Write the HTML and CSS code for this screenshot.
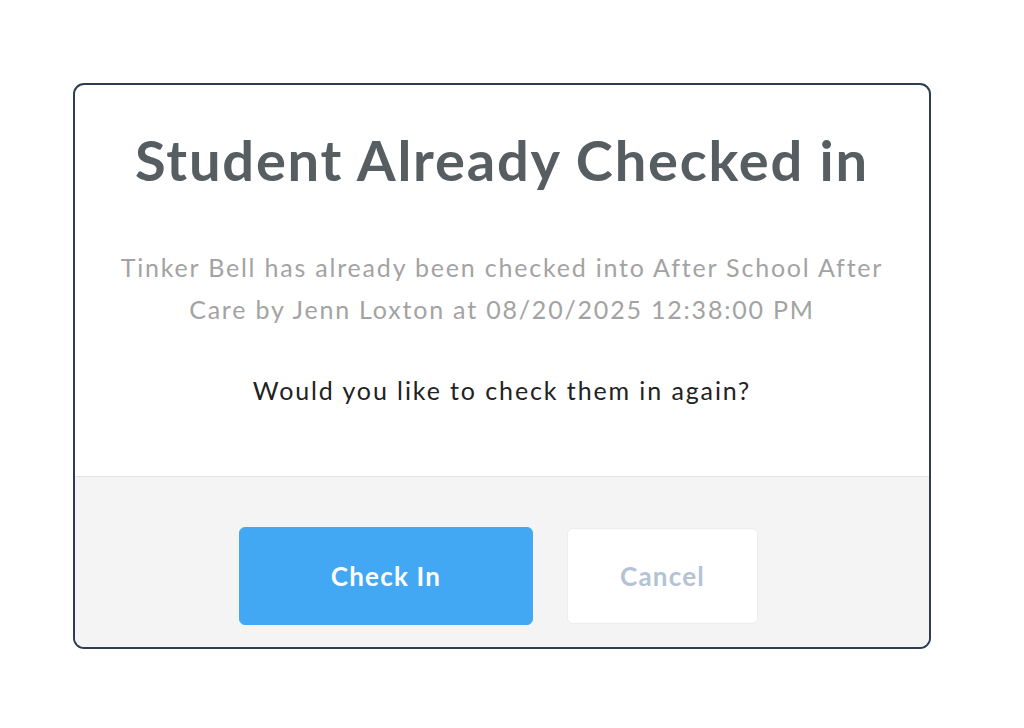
FILE: index.html
```html
<!DOCTYPE html>
<html>
<head>
<meta charset="utf-8">
<link rel="stylesheet" href="styles.css">
</head>
<body>
<div class="modal">
  <div class="modal-body">
    <h1 class="title">Student Already Checked in</h1>
    <p class="desc">Tinker Bell has already been checked into After School After Care by Jenn Loxton at 08/20/2025 12:38:00 PM</p>
    <p class="question">Would you like to check them in again?</p>
  </div>
  <div class="modal-footer">
    <button class="btn btn-primary">Check In</button>
    <button class="btn btn-cancel">Cancel</button>
  </div>
</div>
</body>
</html>
```
FILE: styles.css
```css
html, body {
  margin: 0;
  padding: 0;
  background: #ffffff;
}
body {
  padding: 83px 0 0 73px;
  font-family: Lato, "Noto Sans", sans-serif;
}
.modal {
  width: 854px;
  height: 562px;
  border: 2px solid #2e3d52;
  border-radius: 11px;
  overflow: hidden;
  display: flex;
  flex-direction: column;
  background: #ffffff;
}
.modal-body {
  height: 391px;
  border-bottom: 1px solid #e3e5e9;
  display: flex;
  flex-direction: column;
  align-items: center;
  text-align: center;
}
.title {
  margin: 44px 0 0;
  font-size: 56px;
  line-height: 62px;
  font-weight: 700;
  color: #575e62;
  letter-spacing: 1.8px;
}
.desc {
  margin: 55px 0 0;
  width: 790px;
  font-size: 25px;
  line-height: 42px;
  letter-spacing: 1.8px;
  color: #a3a3a3;
}
.question {
  margin: 45px 0 0;
  font-size: 25px;
  line-height: 30px;
  letter-spacing: 1.9px;
  color: #222222;
}
.modal-footer {
  flex: 1;
  background: #f4f4f5;
  display: flex;
  justify-content: center;
  align-items: center;
  gap: 34px;
  padding: 28px 7px 0 0;
}
.btn {
  font-family: Lato, "Noto Sans", sans-serif;
  font-size: 26px;
  font-weight: 700;
  letter-spacing: 1.2px;
  border-radius: 6px;
  cursor: pointer;
}
.btn-primary {
  width: 294px;
  height: 98px;
  background: #42a8f4;
  border: 1px solid #42a8f4;
  color: #ffffff;
}
.btn-cancel {
  width: 191px;
  height: 96px;
  background: #ffffff;
  border: 1px solid #ebedf0;
  color: #b4c3d3;
}
```
